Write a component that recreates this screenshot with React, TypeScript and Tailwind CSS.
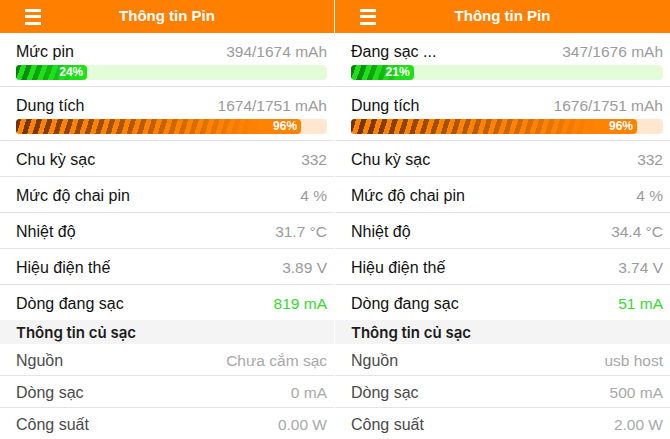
import React from "react";

type PanelData = {
  chargeLabel: string;
  charge: string;
  chargePct: number;
  capacity: string;
  capacityPct: number;
  cycles: string;
  wear: string;
  temp: string;
  voltage: string;
  current: string;
  source: string;
  chargerCurrent: string;
  power: string;
};

const panels: PanelData[] = [
  {
    chargeLabel: "Mức pin",
    charge: "394/1674 mAh",
    chargePct: 24,
    capacity: "1674/1751 mAh",
    capacityPct: 96,
    cycles: "332",
    wear: "4 %",
    temp: "31.7 °C",
    voltage: "3.89 V",
    current: "819 mA",
    source: "Chưa cắm sạc",
    chargerCurrent: "0 mA",
    power: "0.00 W",
  },
  {
    chargeLabel: "Đang sạc ...",
    charge: "347/1676 mAh",
    chargePct: 21,
    capacity: "1676/1751 mAh",
    capacityPct: 96,
    cycles: "332",
    wear: "4 %",
    temp: "34.4 °C",
    voltage: "3.74 V",
    current: "51 mA",
    source: "usb host",
    chargerCurrent: "500 mA",
    power: "2.00 W",
  },
];

// Striped progress bar, green for charge level, orange for capacity
function ProgressBar({ pct, tone }: { pct: number; tone: "green" | "orange" }) {
  const green = tone === "green";
  return (
    <div
      className={`mt-[4px] h-[15px] rounded-[4px] ${green ? "bg-[#e4fdd8]" : "bg-[#ffe6cf]"}`}
    >
      <div
        className={`relative flex h-full items-center justify-end overflow-hidden rounded-[4px] pr-[4px] ${
          green ? "bg-[#1fe01a]" : "bg-[#ff8200]"
        }`}
        style={{ width: `${pct * 0.955}%` }}
      >
        <div
          className={`absolute inset-0 [mask-image:linear-gradient(to_right,#000,transparent_85%)] ${
            green
              ? "bg-[repeating-linear-gradient(110deg,#0a7d0a_0px,#0a7d0a_5px,transparent_5px,transparent_10px)]"
              : "bg-[repeating-linear-gradient(107deg,#6e3400_0px,#6e3400_5px,transparent_5px,transparent_10px)]"
          }`}
        />
        <span className="relative text-[12px] font-bold leading-none text-white">{pct}%</span>
      </div>
    </div>
  );
}

function Row({
  label,
  value,
  valueClass = "text-[#9a9a9a]",
  labelClass = "text-[#111]",
  height = "h-[35px]",
  border = true,
}: {
  label: string;
  value: string;
  valueClass?: string;
  labelClass?: string;
  height?: string;
  border?: boolean;
}) {
  return (
    <div className={`pl-[16px] ${border ? "border-b border-[#e3e3e3]" : ""}`}>
      <div className={`flex items-center justify-between pr-[7px] pt-[3px] ${height}`}>
        <span className={labelClass}>{label}</span>
        <span className={`text-[15.5px] ${valueClass}`}>{value}</span>
      </div>
    </div>
  );
}

function Panel({ d, first }: { d: PanelData; first: boolean }) {
  return (
    <div className={`flex w-[335px] flex-col ${first ? "border-r border-white/50" : ""}`}>
      <div className="grid h-[35px] grid-cols-[1fr_auto_1fr] items-center bg-[#ff7f00]">
        <div className="flex flex-col gap-[3.5px] pl-[25px] pt-[1px]">
          <span className="h-[3px] w-[16px] bg-white" />
          <span className="h-[3px] w-[16px] bg-white" />
          <span className="h-[3px] w-[16px] bg-white" />
        </div>
        <span className="text-[15px] font-bold text-white">Thông tin Pin</span>
        <span />
      </div>

      <div className="border-b border-[#e3e3e3] pb-[6px] pl-[16px] pr-[7px] pt-[10px]">
        <div className="flex h-[18px] items-center justify-between">
          <span className="text-[#111]">{d.chargeLabel}</span>
          <span className="text-[15.5px] text-[#9a9a9a]">{d.charge}</span>
        </div>
        <ProgressBar pct={d.chargePct} tone="green" />
      </div>
      <div className="border-b border-[#e3e3e3] pb-[6px] pl-[16px] pr-[7px] pt-[10px]">
        <div className="flex h-[18px] items-center justify-between">
          <span className="text-[#111]">Dung tích</span>
          <span className="text-[15.5px] text-[#9a9a9a]">{d.capacity}</span>
        </div>
        <ProgressBar pct={d.capacityPct} tone="orange" />
      </div>

      <Row label="Chu kỳ sạc" value={d.cycles} />
      <Row label="Mức độ chai pin" value={d.wear} />
      <Row label="Nhiệt độ" value={d.temp} />
      <Row label="Hiệu điện thế" value={d.voltage} />
      <Row label="Dòng đang sạc" value={d.current} valueClass="text-[#33db2c]" border={false} />

      <div className="flex h-[26px] items-center bg-[#f4f4f4] pl-[16px] pt-[3px] font-['Inter',sans-serif] text-[15px] font-semibold text-[#1a1a1a]">
        Thông tin củ sạc
      </div>
      <Row label="Nguồn" value={d.source} labelClass="text-[#4a4a4a]" valueClass="text-[#a8a8a8]" height="h-[31px]" />
      <Row label="Dòng sạc" value={d.chargerCurrent} labelClass="text-[#4a4a4a]" valueClass="text-[#a8a8a8]" height="h-[31px]" />
      <Row label="Công suất" value={d.power} labelClass="text-[#4a4a4a]" valueClass="text-[#a8a8a8]" height="h-[31px]" border={false} />
    </div>
  );
}

export default function App() {
  return (
    <div className="flex h-[439px] w-[670px] overflow-hidden bg-white font-['Liberation_Sans',Arial,sans-serif] text-[16px] leading-[18px]">
      {panels.map((p, i) => (
        <Panel key={i} d={p} first={i === 0} />
      ))}
    </div>
  );
}
